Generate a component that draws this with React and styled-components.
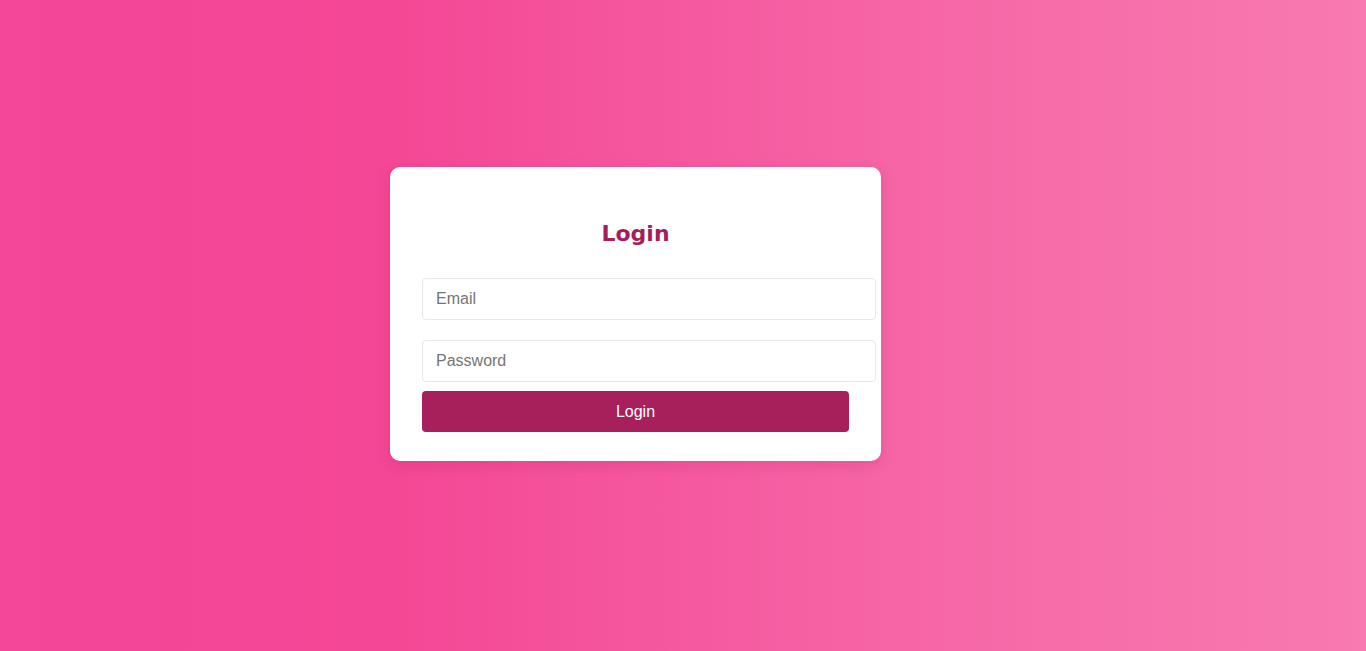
import React from "react";
import styled, { createGlobalStyle } from "styled-components";

const Global = createGlobalStyle`
  html, body { margin: 0; padding: 0; height: 100%; }
  body { font-family: "Liberation Sans", Arial, sans-serif; }
  #root { height: 100%; }
`;

const Page = styled.div`
  box-sizing: border-box;
  width: 100%;
  height: 651px;
  display: flex;
  align-items: center;
  justify-content: center;
  padding: 0 95px 23px 0;
  background: linear-gradient(90deg, #f4469a 0%, #f44795 28%, #f665a6 65%, #f87aaf 100%);
`;

const Card = styled.form`
  box-sizing: border-box;
  width: 491px;
  padding: 32px 32px 29px;
  background: #ffffff;
  border-radius: 10px;
  box-shadow: 0 4px 14px rgba(150, 20, 80, 0.18);
`;

const Title = styled.h2`
  margin: 22px 0 31px;
  text-align: center;
  font-family: "DejaVu Sans", Verdana, sans-serif;
  font-size: 22px;
  line-height: 26px;
  font-weight: bold;
  color: #a51d5b;
`;

const Input = styled.input`
  display: block;
  box-sizing: content-box;
  width: 100%;
  height: 40px;
  padding: 0 12px 0 13px;
  margin: 0 0 ${(p) => p.$gap}px;
  border: 1px solid #e8e8e8;
  border-radius: 4px;
  font-family: "Liberation Sans", Arial, sans-serif;
  font-size: 16px;
  color: #333;
  background: #fff;
  outline: none;
  &::placeholder { color: #757575; }
`;

const Button = styled.button`
  display: block;
  width: 100%;
  height: 41px;
  border: none;
  border-radius: 4px;
  background: #a8205b;
  color: #ffffff;
  font-family: "Liberation Sans", Arial, sans-serif;
  font-size: 16px;
  cursor: pointer;
`;

export default function App() {
  return (
    <>
      <Global />
      <Page>
        <Card onSubmit={(e) => e.preventDefault()}>
          <Title>Login</Title>
          <Input type="email" placeholder="Email" $gap={20} />
          <Input type="password" placeholder="Password" $gap={9} />
          <Button type="submit">Login</Button>
        </Card>
      </Page>
    </>
  );
}
